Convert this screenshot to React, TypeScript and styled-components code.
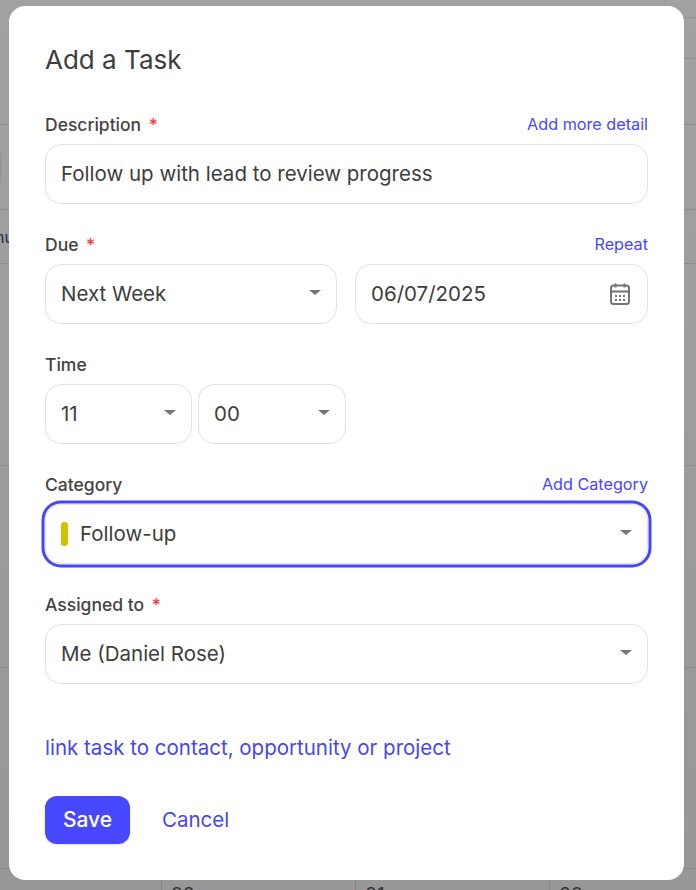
import React from "react";
import styled, { createGlobalStyle } from "styled-components";

const Global = createGlobalStyle`
  html, body { margin: 0; padding: 0; }
  body { font-family: Inter, "Liberation Sans", sans-serif; }
  * { box-sizing: border-box; }
`;

const Page = styled.div`
  position: relative;
  width: 696px;
  height: 890px;
  overflow: hidden;
  background: linear-gradient(180deg, #a1a1a1 0%, #979797 100%);
`;

const Backdrop = styled.div`
  display: flex;
  flex-direction: column;
  height: 100%;
`;

const BackRow = styled.div<{ $h: number }>`
  position: relative;
  flex: none;
  height: ${(p) => p.$h}px;
  border-bottom: 1px solid #8b8b8b;
`;

const BackCorner = styled.div`
  position: absolute;
  left: 672px;
  top: 17px;
  width: 60px;
  height: 42px;
  border: 1px solid #8f8f8f;
  border-radius: 14px;
`;

const BackTab = styled.div`
  margin-left: -5px;
  padding: 17px 0 0 0;
  font-size: 16px;
  line-height: 20px;
  color: #24304a;
`;

const BackBox = styled.div`
  width: 1px;
  height: 32px;
  margin-top: 26px;
  background: #929292;
`;

const BackDates = styled.div`
  display: flex;
  padding-left: 161px;
`;

const BackCell = styled.div`
  flex: none;
  width: 194px;
  height: 22px;
  padding: 13px 0 0 9px;
  border-left: 1px solid #858585;
  font-size: 19px;
  line-height: 26px;
  color: #333;
`;

const Modal = styled.div`
  position: absolute;
  left: 9px;
  top: 6px;
  width: 675px;
  height: 874px;
  padding: 36px 36px 0;
  background: #fff;
  border-radius: 16px;
`;

const Title = styled.h2`
  margin: 0 0 36px;
  font-size: 26px;
  line-height: 36px;
  font-weight: 400;
  color: #3d3d3d;
`;

const Field = styled.div`
  margin-bottom: 30px;
`;

const LabelRow = styled.div`
  display: flex;
  justify-content: space-between;
  align-items: center;
  height: 20px;
  margin-bottom: 10px;
`;

const Label = styled.span`
  padding-top: 2px;
  font-size: 17.5px;
  line-height: 20px;
  font-weight: 450;
  color: #444;
`;

const Star = styled.span`
  margin-left: 3px;
  color: #f23d3d;
`;

const SmallLink = styled.a`
  font-size: 16.2px;
  line-height: 20px;
  color: #4747ff;
`;

const Controls = styled.div<{ $gap: number }>`
  display: flex;
  gap: ${(p) => p.$gap}px;
`;

const Control = styled.div<{ $w?: number; $focus?: boolean }>`
  display: flex;
  align-items: center;
  gap: 12px;
  flex: ${(p) => (p.$w ? "none" : "1")};
  width: ${(p) => (p.$w ? `${p.$w}px` : "auto")};
  height: 60px;
  padding: 0 15px;
  background: #fff;
  border: 1px solid #e2e2e2;
  border-radius: 16px;
  font-size: 20.5px;
  color: #3d3d3d;
  box-shadow: ${(p) => (p.$focus ? "0 0 0 0.5px #fff, 0 0 0 3.5px #4646f8" : "none")};
`;

const Value = styled.span`
  flex: 1;
  padding-bottom: 2px;
  white-space: nowrap;
`;

const Caret = styled.span`
  flex: none;
  width: 0;
  height: 0;
  margin-bottom: 3px;
  border-left: 6px solid transparent;
  border-right: 6px solid transparent;
  border-top: 5px solid #757575;
`;

const Swatch = styled.span`
  flex: none;
  width: 7px;
  height: 24px;
  border-radius: 3px;
  background: #d2c200;
`;

const TaskLink = styled.a`
  display: block;
  margin-top: 50px;
  font-size: 20.5px;
  line-height: 28px;
  color: #4646f0;
`;

const Actions = styled.div`
  display: flex;
  align-items: center;
  gap: 32px;
  margin-top: 34px;
`;

const SaveButton = styled.button`
  width: 85px;
  height: 48px;
  padding: 0 0 2px;
  border: none;
  border-radius: 12px;
  background: #4747ff;
  color: #fff;
  font: 500 21px Inter, sans-serif;
  box-shadow: 0 1px 3px rgba(0, 0, 0, 0.12);
`;

const CancelLink = styled.a`
  padding-bottom: 2px;
  font-size: 20.5px;
  color: #4646f0;
`;

const CalendarIcon = () => (
  <svg width="22" height="24" viewBox="0 0 22 24" fill="none" style={{ flex: "none", marginRight: 1 }}>
    <rect x="2" y="3.500" width="18" height="18.500" rx="2.500" stroke="#757575" strokeWidth="2" />
    <path d="M2 9.500h18M6.500 1.500v4M15.500 1.500v4" stroke="#757575" strokeWidth="2" />
    <path
      d="M6 13h2v2H6zM10 13h2v2h-2zM14 13h2v2h-2zM6 17h2v2H6zM10 17h2v2h-2zM14 17h2v2h-2z"
      fill="#757575"
    />
  </svg>
);

export default function App() {
  return (
    <Page>
      <Global />
      <Backdrop>
        <BackRow $h={125}>
          <BackCorner />
        </BackRow>
        <BackRow $h={85}>
          <BackBox />
        </BackRow>
        <BackRow $h={54}>
          <BackTab>nu</BackTab>
        </BackRow>
        <BackRow $h={202} />
        <BackRow $h={202} />
        <BackRow $h={201} />
        <BackDates>
          <BackCell>30</BackCell>
          <BackCell>01</BackCell>
          <BackCell>02</BackCell>
        </BackDates>
      </Backdrop>
      <Modal>
        <Title>Add a Task</Title>
        <Field>
          <LabelRow>
            <Label>
              Description <Star>*</Star>
            </Label>
            <SmallLink>Add more detail</SmallLink>
          </LabelRow>
          <Control>
            <Value>Follow up with lead to review progress</Value>
          </Control>
        </Field>
        <Field>
          <LabelRow>
            <Label>
              Due <Star>*</Star>
            </Label>
            <SmallLink>Repeat</SmallLink>
          </LabelRow>
          <Controls $gap={18}>
            <Control $w={292}>
              <Value>Next Week</Value>
              <Caret />
            </Control>
            <Control>
              <Value>06/07/2025</Value>
              <CalendarIcon />
            </Control>
          </Controls>
        </Field>
        <Field>
          <LabelRow>
            <Label>Time</Label>
          </LabelRow>
          <Controls $gap={6}>
            <Control $w={147}>
              <Value>11</Value>
              <Caret />
            </Control>
            <Control $w={148}>
              <Value>00</Value>
              <Caret />
            </Control>
          </Controls>
        </Field>
        <Field>
          <LabelRow>
            <Label>Category</Label>
            <SmallLink>Add Category</SmallLink>
          </LabelRow>
          <Control $focus>
            <Swatch />
            <Value>Follow-up</Value>
            <Caret />
          </Control>
        </Field>
        <Field>
          <LabelRow>
            <Label>
              Assigned to <Star>*</Star>
            </Label>
          </LabelRow>
          <Control>
            <Value>Me (Daniel Rose)</Value>
            <Caret />
          </Control>
        </Field>
        <TaskLink>link task to contact, opportunity or project</TaskLink>
        <Actions>
          <SaveButton>Save</SaveButton>
          <CancelLink>Cancel</CancelLink>
        </Actions>
      </Modal>
    </Page>
  );
}
